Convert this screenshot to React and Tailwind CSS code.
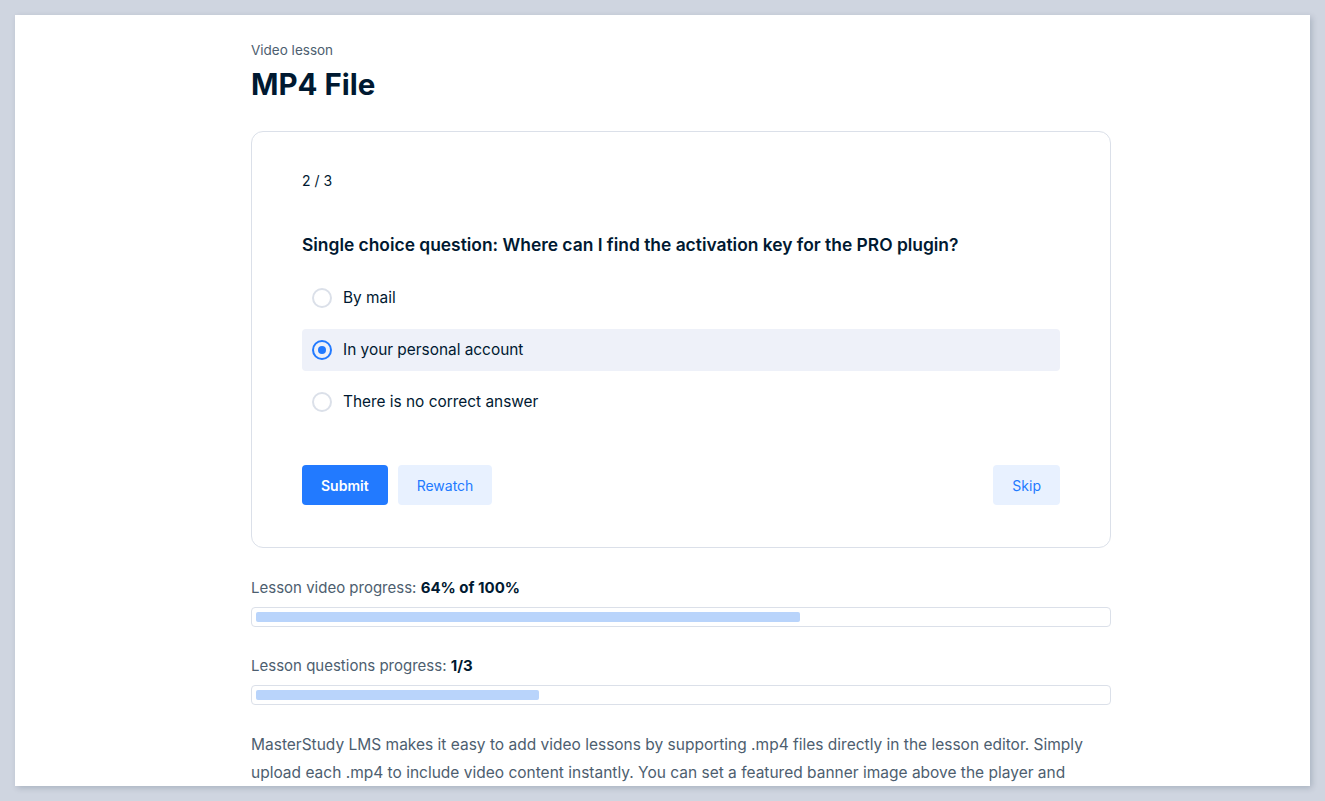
import React, { useState } from "react";

const options = ["By mail", "In your personal account", "There is no correct answer"];

const Radio = ({ checked }) => (
  <span
    className={
      "flex h-5 w-5 shrink-0 items-center justify-center rounded-full border-2 " +
      (checked ? "border-[#227aff]" : "border-[#dbe0e9]")
    }
  >
    {checked && <span className="h-2 w-2 rounded-full bg-[#227aff]" />}
  </span>
);

const ProgressBar = ({ label, value, percent }) => (
  <div>
    <p className="text-[15px] leading-5 text-[#4d5e6f]">
      {label}: <span className="font-bold text-[#001931]">{value}</span>
    </p>
    <div className="mt-[9px] h-5 w-full rounded-[4px] border border-[#dbe0e9] p-1">
      <div className="h-[10px] rounded-[2px] bg-[#b9d4fb]" style={{ width: `${percent}%` }} />
    </div>
  </div>
);

export default function App() {
  const [selected, setSelected] = useState(1);

  return (
    <div className="h-[801px] overflow-hidden bg-[#cfd5e0] p-[15px] font-['Inter',sans-serif]">
      <div className="h-[771px] w-[1295px] overflow-hidden bg-white pl-[236px] pt-[26px] shadow-[2px_2px_6px_rgba(0,25,49,0.18)]">
        <div className="w-[860px]">
          <p className="text-[13.5px] leading-[18px] text-[#4d5e6f]">Video lesson</p>
          <h1 className="mt-[7px] text-[29.5px] font-bold leading-[36px] text-[#001931]">MP4 File</h1>

          <div className="mt-[29px] rounded-xl border border-[#dbe0e9] px-[50px] pb-[42px] pt-[39px]">
            <p className="text-[14px] leading-5 text-[#001931]">2 / 3</p>
            <h2 className="mt-[42px] text-[17.4px] font-semibold leading-6 text-[#001931]">
              Single choice question: Where can I find the activation key for the PRO plugin?
            </h2>

            <div className="mt-[20px] flex flex-col gap-[10px]">
              {options.map((opt, i) => (
                <button
                  key={opt}
                  onClick={() => setSelected(i)}
                  className={
                    "flex h-[42px] items-center gap-[11px] rounded-[4px] px-[10px] text-left text-[15.4px] text-[#001931] " +
                    (selected === i ? "bg-[#eef1f9]" : "bg-white")
                  }
                >
                  <Radio checked={selected === i} />
                  <span>{opt}</span>
                </button>
              ))}
            </div>

            <div className="mt-[42px] flex items-center gap-[10px]">
              <button className="h-10 rounded-[4px] bg-[#227aff] px-[19px] text-[14px] font-semibold text-white">
                Submit
              </button>
              <button className="h-10 rounded-[4px] bg-[#e8f1ff] px-[19px] text-[14px] text-[#227aff]">
                Rewatch
              </button>
              <button className="ml-auto h-10 rounded-[4px] bg-[#e8f1ff] px-[19px] text-[14px] text-[#227aff]">
                Skip
              </button>
            </div>
          </div>

          <div className="mt-[30px] flex flex-col gap-[29px]">
            <ProgressBar label="Lesson video progress" value="64% of 100%" percent={64} />
            <ProgressBar label="Lesson questions progress" value="1/3" percent={33.33} />
          </div>

          <p className="mt-[26px] text-[15.5px] leading-7 text-[#4d5e6f]">
            MasterStudy LMS makes it easy to add video lessons by supporting .mp4 files directly in the lesson editor. Simply
            upload each .mp4 to include video content instantly. You can set a featured banner image above the player and
          </p>
        </div>
      </div>
    </div>
  );
}
